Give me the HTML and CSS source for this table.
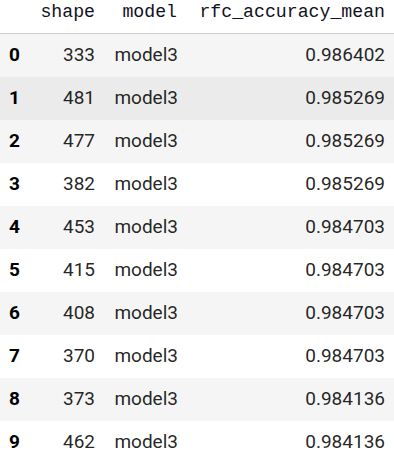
FILE: index.html
```html
<!DOCTYPE html>
<html>
<head>
<meta charset="utf-8">
<link rel="stylesheet" href="styles.css">
</head>
<body>
<table class="df">
  <colgroup>
    <col class="c-idx"><col class="c-shape"><col class="c-model"><col class="c-acc">
  </colgroup>
  <thead>
    <tr><th></th><th>shape</th><th>model</th><th>rfc_accuracy_mean</th></tr>
  </thead>
  <tbody>
    <tr class="alt"><th>0</th><td>333</td><td>model3</td><td>0.986402</td></tr>
    <tr class="hover"><th>1</th><td>481</td><td>model3</td><td>0.985269</td></tr>
    <tr class="alt"><th>2</th><td>477</td><td>model3</td><td>0.985269</td></tr>
    <tr><th>3</th><td>382</td><td>model3</td><td>0.985269</td></tr>
    <tr class="alt"><th>4</th><td>453</td><td>model3</td><td>0.984703</td></tr>
    <tr><th>5</th><td>415</td><td>model3</td><td>0.984703</td></tr>
    <tr class="alt"><th>6</th><td>408</td><td>model3</td><td>0.984703</td></tr>
    <tr><th>7</th><td>370</td><td>model3</td><td>0.984703</td></tr>
    <tr class="alt"><th>8</th><td>373</td><td>model3</td><td>0.984136</td></tr>
    <tr><th>9</th><td>462</td><td>model3</td><td>0.984136</td></tr>
  </tbody>
</table>
</body>
</html>
```
FILE: styles.css
```css
html, body {
  margin: 0;
  padding: 0;
  background: #ffffff;
}
.df {
  border-collapse: collapse;
  border-spacing: 0;
  table-layout: fixed;
  width: 394px;
  font-family: Roboto, "Noto Sans", sans-serif;
  font-size: 19px;
  color: rgba(0, 0, 0, 0.87);
}
.c-idx { width: 30px; }
.c-shape { width: 75px; }
.c-model { width: 83px; }
.c-acc { width: 206px; }
.df thead th {
  font-family: "Liberation Mono", "DejaVu Sans Mono", monospace;
  font-size: 18.2px;
  font-weight: normal;
  color: #111122;
  text-align: right;
  line-height: 24px;
  height: 33px;
  padding: 0 10px 9px 0;
  box-sizing: border-box;
  vertical-align: top;
  border-bottom: 1px solid #d0d0d0;
  white-space: nowrap;
}
.df thead th:nth-child(3) { padding-right: 11px; }
.df thead th:nth-child(4) { padding-right: 9px; }
.df tbody th,
.df tbody td {
  line-height: 41px;
  padding: 0 10px 2px 0;
  text-align: right;
  white-space: nowrap;
  vertical-align: top;
}
.df tbody th {
  font-weight: bold;
  color: #000;
}
.df tbody td:nth-child(4) { padding-right: 9px; }
.df tbody tr.alt { background: #f5f5f5; }
.df tbody tr.hover { background: #ebebeb; }
```
